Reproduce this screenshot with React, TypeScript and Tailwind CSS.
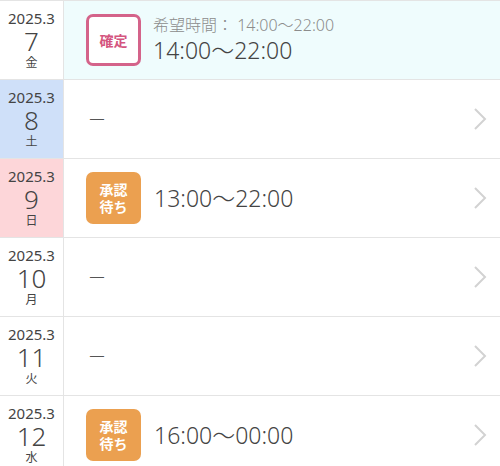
const font = { fontFamily: '"Noto Sans", "Noto Sans CJK JP", sans-serif' };
const jp = { fontFamily: '"Noto Sans CJK JP", sans-serif' };

type Day = {
  day: string;
  week: string;
  dateBg: string;
  kind: 'fixed' | 'pending' | 'none';
  time?: string;
};

const days: Day[] = [
  { day: '7', week: '金', dateBg: 'bg-white', kind: 'fixed', time: '14:00〜22:00' },
  { day: '8', week: '土', dateBg: 'bg-[#cfe0f9]', kind: 'none' },
  { day: '9', week: '日', dateBg: 'bg-[#fdd6d9]', kind: 'pending', time: '13:00〜22:00' },
  { day: '10', week: '月', dateBg: 'bg-white', kind: 'none' },
  { day: '11', week: '火', dateBg: 'bg-white', kind: 'none' },
  { day: '12', week: '水', dateBg: 'bg-white', kind: 'pending', time: '16:00〜00:00' },
];

function Chevron() {
  return (
    <svg width="14" height="24" viewBox="0 0 14 24" className="shrink-0">
      <polyline points="2,2 12,12 2,22" fill="none" stroke="#d2d2d2" strokeWidth="2" />
    </svg>
  );
}

function Row({ d }: { d: Day }) {
  return (
    <div className="flex h-[79px] border-b border-[#e4e4e4]">
      <div className={`w-[64px] shrink-0 border-r border-[#e4e4e4] flex flex-col items-center pt-[9px] text-[#444] ${d.dateBg}`}>
        <div className="text-[15px] leading-[17px]">2025.3</div>
        <div className="text-[26px] leading-[28px] font-light">{d.day}</div>
        <div className="text-[12px] leading-[14px]" style={jp}>{d.week}</div>
      </div>
      <div className={`flex-1 flex items-center pl-[22px] pr-[13px] ${d.kind === 'fixed' ? 'bg-[#effcfd]' : 'bg-white'}`}>
        {d.kind === 'fixed' && (
          <>
            <div className="w-[55px] h-[52px] shrink-0 rounded-[7px] border-[3px] border-[#d4638a] bg-white flex items-center justify-center text-[14px] font-bold text-[#d4557f]" style={jp}>
              確定
            </div>
            <div className="ml-[12px] flex flex-col">
              <div className="text-[16px] leading-[20px] text-[#8c8c8c] font-light">希望時間： 14:00〜22:00</div>
              <div className="text-[23px] leading-[30px] text-[#444] font-light">{d.time}</div>
            </div>
          </>
        )}
        {d.kind === 'pending' && (
          <>
            <div className="w-[55px] h-[52px] shrink-0 rounded-[7px] bg-[#eba050] flex items-center justify-center text-center text-[14px] leading-[17px] font-bold text-white" style={jp}>
              承認<br />待ち
            </div>
            <div className="ml-[13px] text-[23px] text-[#444] font-light">{d.time}</div>
          </>
        )}
        {d.kind === 'none' && <div className="ml-[2px] text-[18px] text-[#555] font-light" style={jp}>ー</div>}
        <div className="flex-1" />
        {d.kind !== 'fixed' && <Chevron />}
      </div>
    </div>
  );
}

export default function App() {
  return (
    <div className="w-[500px] h-[466px] overflow-hidden bg-white border-t border-[#e4e4e4]" style={font}>
      {days.map((d) => (
        <Row key={d.day} d={d} />
      ))}
    </div>
  );
}
